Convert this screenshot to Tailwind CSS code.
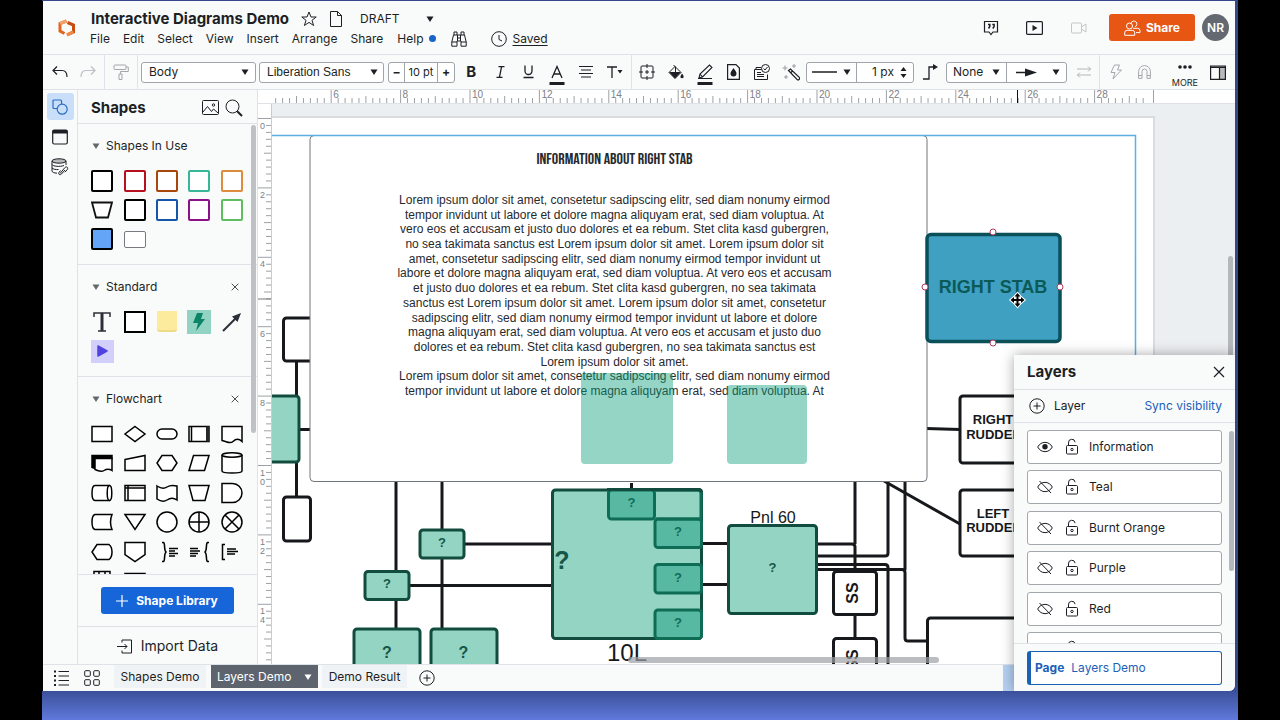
<!DOCTYPE html>
<html lang="en">

<head>
    <meta charset="utf-8">
    <title>Interactive Diagrams Demo</title>
    <script src="https://cdn.jsdelivr.net/npm/@tailwindcss/browser@4"></script>
</head>

<body class="h-screen overflow-hidden bg-black px-[42px] font-['Inter','Liberation_Sans',sans-serif] text-xs text-[#1c1f24]">
    <!-- shared icons -->
    <svg class="hidden">
        <symbol id="caret" viewBox="0 0 8 6"><path d="M0.5 0.5h7L4 6z" fill="currentColor" /></symbol>
        <symbol id="close" viewBox="0 0 12 12"><path d="M1 1l10 10M11 1L1 11" fill="none" stroke="currentColor" stroke-width="1.2" /></symbol>
        <symbol id="lock" viewBox="0 0 14 18">
            <g fill="none" stroke="currentColor"><rect x="1.5" y="7.5" width="11" height="8.500" rx="1" /><path d="M3.500 7.500V5a3.300 3.300 0 0 1 6.600-.8" /><circle cx="7" cy="11.500" r="1.200" /></g>
        </symbol>
        <symbol id="eye" viewBox="0 0 16 12">
            <path d="M.7 6C4-.2 12-.2 15.300 6C12 12.200 4 12.200 .7 6z" fill="none" stroke="currentColor" /><circle cx="8" cy="5.800" r="2.700" fill="currentColor" />
        </symbol>
        <symbol id="eye-off" viewBox="0 0 16 14">
            <path d="M.7 7C4 .8 12 .8 15.300 7C12 13.200 4 13.200 .7 7zM2.500 1l11.500 12" fill="none" stroke="currentColor" />
        </symbol>
        <symbol id="plus-circle" viewBox="0 0 16 16">
            <path d="M8 4.500v7M4.500 8h7" fill="none" stroke="currentColor" /><circle cx="8" cy="8" r="7.200" fill="none" stroke="currentColor" />
        </symbol>
    </svg>

    <div class="h-full bg-linear-to-t from-[#6079dc] via-[#33478b] via-5% to-[#33478b] pt-px pr-[3px] pb-[29px]">
        <div class="relative flex h-full flex-col overflow-hidden rounded-br-md border-l border-black bg-[#f9fafa]">

            <!-- title and menus -->
            <header class="flex h-[54px] shrink-0 items-center border-b border-[#dfe3e8] pr-[6px]">
                <svg class="ml-[15px] h-[18px] w-[18px]" viewBox="0 0 18 18" fill="none" stroke-width="3">
                    <path d="M8.500 2L2 4.500V12L6.500 14.500" stroke="#e0661f" /><path d="M2 4.500L8.500 2" stroke="#f6a065" />
                    <path d="M9.500 3.500L15.500 6V13L9 15.800" stroke="#c94d12" /><path d="M15.500 13L9 15.800" stroke="#f08a45" />
                </svg>
                <div class="ml-[15px] flex flex-col pt-[3px]">
                    <div class="-mt-px flex h-5 items-center">
                        <h1 class="text-[15px] font-bold whitespace-nowrap">Interactive Diagrams Demo</h1>
                        <button class="ml-3" aria-label="Favorite"><svg class="h-4 w-4" viewBox="0 0 16 16" fill="none" stroke="currentColor"><path d="M8 1l2 5h5.200l-4.200 3.300 1.600 5.200L8 11.400 3.400 14.500 5 9.300.8 6H6z" /></svg></button>
                        <button class="ml-[13px]" aria-label="Document"><svg class="h-4 w-3" viewBox="0 0 12 16" fill="none" stroke="currentColor"><path d="M.5.500h7l4 4v11H.5zM7.500.500v4h4" /></svg></button>
                        <label class="relative ml-[18px] flex items-center">
                            <span class="sr-only">Status</span>
                            <select class="w-[74px] appearance-none text-xs"><option>DRAFT</option></select>
                            <svg class="pointer-events-none absolute right-0 h-[6px] w-2"><use href="#caret" /></svg>
                        </label>
                    </div>
                    <nav class="-ml-px flex h-5 items-center gap-[13px]">
                        <button>File</button><button>Edit</button><button>Select</button><button>View</button><button>Insert</button><button>Arrange</button><button>Share</button>
                        <button class="ml-px flex items-center gap-[5px]">Help<span class="h-[7px] w-[7px] rounded-full bg-[#1a64c8]"></span></button>
                        <button class="ml-[2px]" aria-label="Find"><svg class="h-4 w-4" viewBox="0 0 16 16" fill="none" stroke="currentColor"><path d="M3 4V1h3v3M10 4V1h3v3M6.500 4h3v6h-3zM6.500 4H2.500L.8 11v4.200h5.200V10M9.500 4h4l1.700 7v4.200H10V10M.8 11H6M10 11h5.200M6.500 7h3" /></svg></button>
                        <button class="ml-[11px] flex items-center gap-[6px] underline underline-offset-2"><svg class="h-4 w-4" viewBox="0 0 16 16" fill="none" stroke="currentColor"><circle cx="8" cy="8" r="7.300" /><path d="M8 4v4.500l3 1.500" /></svg>Saved</button>
                    </nav>
                </div>
                <div class="ml-auto flex items-center">
                    <button aria-label="Comments"><svg class="h-4 w-4" viewBox="0 0 16 16" fill="none" stroke="currentColor" stroke-width="1.200"><path d="M1.500 1.500h13v10.500H10l-2 2.500L6 12H1.500z" /><path d="M5 4.500h1.800v2L5.500 8.500M9.300 4.500h1.800v2L9.800 8.500" stroke-width="1.500" /></svg></button>
                    <button class="ml-[27px]" aria-label="Present"><svg class="h-[14px] w-[17px]" viewBox="0 0 17 14"><rect x=".6" y=".6" width="15.800" height="12.800" rx="1" fill="none" stroke="currentColor" stroke-width="1.200" /><path d="M6.500 4l5 3-5 3z" fill="currentColor" /></svg></button>
                    <button class="ml-7 text-[#c3c6ca]" aria-label="Video"><svg class="h-3 w-4" viewBox="0 0 16 12" fill="none" stroke="currentColor"><rect x=".5" y="1" width="10" height="10" rx="1" /><path d="M10.500 5l4.500-3v8l-4.500-3" /></svg></button>
                    <button class="ml-[22px] flex h-[27px] w-[86px] items-center justify-center gap-[5px] rounded-[3px] bg-[#e85614] text-xs font-bold text-white">
                        <svg class="h-4 w-[17px]" viewBox="0 0 17 16" fill="none" stroke="currentColor"><circle cx="5.500" cy="6" r="3" /><path d="M.7 15.300v-2.500a2.500 2.500 0 0 1 2.500-2.500h5a2.500 2.500 0 0 1 2.500 2.500v2.500zM7 3.200a3 3 0 1 1 4 3.600M9 8.300h4.500a2.500 2.500 0 0 1 2.500 2.500v1.800h-4" /></svg>Share
                    </button>
                    <button class="ml-[7px] h-[27px] w-[27px] rounded-full bg-[#646870] text-xs font-semibold text-white">NR</button>
                </div>
            </header>

            <!-- formatting toolbar -->
            <div class="flex h-[35px] shrink-0 items-center border-b border-[#dfe3e8]">
                <button class="ml-[9px]" aria-label="Undo"><svg class="h-3 w-4" viewBox="0 0 16 12" fill="none" stroke="currentColor" stroke-width="1.200"><path d="M5 .5L1 4.500l4 4M1 4.500h9c3 0 5 2 5 6.500" /></svg></button>
                <button class="ml-3 text-[#bcc0c4]" aria-label="Redo"><svg class="h-3 w-4" viewBox="0 0 16 12" fill="none" stroke="currentColor" stroke-width="1.200"><path d="M11 .5l4 4-4 4M15 4.500H6c-3 0-5 2-5 6.500" /></svg></button>
                <div class="ml-2 h-full w-px bg-[#dfe3e8]"></div>
                <button class="ml-2 text-[#a4a8ac]" aria-label="Copy style"><svg class="h-4 w-4" viewBox="0 0 16 16" fill="none" stroke="currentColor"><rect x="1" y="1" width="12" height="4.500" rx="1" /><path d="M13 3h2.300v4.500H7.500V10M6 10h3v5.500H6z" /></svg></button>
                <div class="ml-2 h-full w-px bg-[#dfe3e8]"></div>
                <label class="relative ml-[3px] flex items-center">
                    <span class="sr-only">Text style</span>
                    <select class="h-[21px] w-[115px] appearance-none rounded-[3px] border border-[#9fa5aa] bg-white px-[7px] text-xs"><option>Body</option></select>
                    <svg class="pointer-events-none absolute right-[7px] h-[6px] w-2"><use href="#caret" /></svg>
                </label>
                <label class="relative ml-[3px] flex items-center">
                    <span class="sr-only">Font</span>
                    <select class="h-[21px] w-[125px] appearance-none rounded-[3px] border border-[#9fa5aa] bg-white px-[7px] font-['Liberation_Sans',sans-serif] text-xs"><option>Liberation Sans</option></select>
                    <svg class="pointer-events-none absolute right-[6px] h-[6px] w-2"><use href="#caret" /></svg>
                </label>
                <div class="ml-1 flex h-[21px] w-[67px] divide-x divide-[#9fa5aa] rounded-[3px] border border-[#9fa5aa] bg-white text-xs">
                    <button class="w-4 font-bold" aria-label="Smaller">−</button>
                    <input class="w-[33px] text-center text-[11px]" aria-label="Font size" value="10 pt">
                    <button class="w-4 font-bold" aria-label="Larger">+</button>
                </div>
                <div class="ml-[2px] flex w-[172px] items-center *:flex *:h-6 *:flex-1 *:items-center *:justify-center">
                    <button class="text-[15px] font-bold">B</button>
                    <button aria-label="Italic"><svg class="h-3 w-[9px]" viewBox="0 0 9 12" fill="none" stroke="currentColor" stroke-width="1.300"><path d="M2.500 .7h6M.5 11.300h6M5.600 .7L3.400 11.300" /></svg></button>
                    <button aria-label="Underline"><svg class="h-[14px] w-[11px]" viewBox="0 0 11 14" fill="none" stroke="currentColor" stroke-width="1.300"><path d="M2 .5V6a3.500 3.500 0 0 0 7 0V.5M.5 12.500h10" /></svg></button>
                    <button class="pt-[5px]" aria-label="Text color"><svg class="h-5 w-4" viewBox="0 0 16 20"><path d="M3 13L8 1.500 13 13M4.600 9h6.800" fill="none" stroke="currentColor" stroke-width="1.300" /><path d="M.5 17h15v3H.5z" fill="currentColor" /></svg></button>
                    <button aria-label="Align"><svg class="h-3 w-[14px]" viewBox="0 0 14 12" stroke="currentColor"><path d="M0 .5h14M2 4h10M0 7.500h14M2 11h10" /></svg></button>
                    <button aria-label="Text options"><svg class="h-3 w-4" viewBox="0 0 16 12"><path d="M0 1h10M5 1v11" fill="none" stroke="currentColor" stroke-width="1.300" /><path d="M10.500 4h5l-2.500 3.500z" fill="currentColor" /></svg></button>
                </div>
                <div class="ml-[2px] h-full w-px bg-[#dfe3e8]"></div>
                <div class="ml-px flex w-[172px] items-center *:flex *:h-6 *:flex-1 *:items-center *:justify-center">
                    <button aria-label="Fit"><svg class="h-4 w-4" viewBox="0 0 16 16" fill="none" stroke="currentColor"><rect x="2" y="2" width="12" height="12" rx="1" /><path d="M8 0v4M8 12v4M0 8h4M12 8h4M8 6v4M6 8h4" /></svg></button>
                    <button aria-label="Fill"><svg class="h-4 w-4" viewBox="0 0 16 16"><path d="M1 8.500L7 2.500l6 6-6 6z" fill="none" stroke="currentColor" /><path d="M1 8l12 0-6 6.500zM14 9.500c1.500 2 2 3 1.500 4s-2.500 1-3 0 .5-2 1.500-4z" fill="currentColor" /><path d="M5.500 1l2 2v5" fill="none" stroke="currentColor" /></svg></button>
                    <button class="pt-[4px]" aria-label="Line color"><svg class="h-[22px] w-4" viewBox="0 0 16 22"><path d="M2 15l1-4L12.500 2l2.500 2.500L5.500 14zM3 11l2.500 3M1 15.500h14" fill="none" stroke="currentColor" stroke-width="1.100" /><path d="M.5 19h15v3H.5z" fill="currentColor" /></svg></button>
                    <button aria-label="Opacity"><svg class="h-4 w-[13px]" viewBox="0 0 13 16"><path d="M.6.600h8.400l3.400 3.400v11.400H.6z" fill="none" stroke="currentColor" stroke-width="1.200" /><path d="M6.500 4c2 3 3 4 3 5.500a3 3 0 0 1-6 0C3.500 8 4.500 7 6.500 4z" fill="currentColor" /></svg></button>
                    <button aria-label="Actions"><svg class="h-4 w-4" viewBox="0 0 16 16" fill="none" stroke="currentColor"><path d="M7 3.500H2v2M.5 5.500h7M.5 5.500v10h13v-5M3 8.500h4M3 10.500h7M3 12.500h7" /><circle cx="11.500" cy="4.500" r="4" /><path d="M9.500 4.500l1.500 1.500 2.500-3" /></svg></button>
                    <button aria-label="Magic"><svg class="h-[17px] w-[18px]" viewBox="0 0 18 17" fill="none" stroke="currentColor"><path d="M6.500 6.500l2-1.500 9 8.500c.5 1.500-.5 2.500-2 2.500zM8.500 9l2-2" stroke-width="1.200" /><path d="M3 1.500v5M.5 4h5M12 0v4M10 2h4M4 11v4M2 13h4" stroke="#9a9da1" /></svg></button>
                </div>
                <div class="ml-px flex h-[21px] w-[108px] divide-x divide-[#9fa5aa] rounded-[3px] border border-[#9fa5aa] bg-white">
                    <button class="flex w-[50px] items-center justify-center gap-[6px]" aria-haspopup="listbox" aria-label="Line style">
                        <svg class="h-[2px] w-[25px]"><path d="M0 1h25" stroke="currentColor" stroke-width="1.500" /></svg><svg class="h-[6px] w-2"><use href="#caret" /></svg>
                    </button>
                    <label class="flex w-[56px] items-center justify-end gap-[6px] pr-[6px]"><span class="sr-only">Line width</span>
                        <input class="w-[28px] text-right text-xs" value="1 px">
                        <svg class="h-[13px] w-[7px]" viewBox="0 0 7 13"><path d="M.5 5h6l-3-4zM.5 8h6l-3 4z" fill="currentColor" /></svg>
                    </label>
                </div>
                <button class="ml-[9px]" aria-label="Line shape"><svg class="h-4 w-4" viewBox="0 0 16 16"><path d="M0 15h6V3h5" fill="none" stroke="currentColor" stroke-width="1.300" /><path d="M10 0l5 3-5 3z" fill="currentColor" /></svg></button>
                <div class="ml-[7px] flex h-[21px] w-[121px] divide-x divide-[#9fa5aa] rounded-[3px] border border-[#9fa5aa] bg-white">
                    <label class="relative flex w-[60px] items-center"><span class="sr-only">Line start</span>
                        <select class="w-full appearance-none pl-[6px] text-xs"><option>None</option></select>
                        <svg class="pointer-events-none absolute right-[6px] h-[6px] w-2"><use href="#caret" /></svg>
                    </label>
                    <button class="flex w-[59px] items-center justify-end gap-[15px] pr-[6px]" aria-haspopup="listbox" aria-label="Line end">
                        <svg class="h-[9px] w-[21px]" viewBox="0 0 21 9"><path d="M0 4.500h12" stroke="currentColor" stroke-width="1.500" /><path d="M9 .5l12 4-12 4z" fill="currentColor" /></svg><svg class="h-[6px] w-2"><use href="#caret" /></svg>
                    </button>
                </div>
                <button class="ml-[9px] text-[#b3b7bb]" aria-label="Swap ends"><svg class="h-3 w-4" viewBox="0 0 16 12" fill="none" stroke="currentColor"><path d="M1 3h14M12 .5L14.500 3 12 5.500M15 9H1M4 6.500L1.500 9 4 11.500" /></svg></button>
                <div class="ml-[7px] h-full w-px bg-[#dfe3e8]"></div>
                <button class="ml-[10px] text-[#a4a8ac]" aria-label="Actions"><svg class="h-4 w-3" viewBox="0 0 12 16" fill="none" stroke="currentColor"><path d="M4.500 1h5L7.500 6H11.500L3 15l2-6.500H1z" /></svg></button>
                <button class="ml-4 text-[#a4a8ac]" aria-label="Magnet"><svg class="h-[14px] w-[13px]" viewBox="0 0 13 14" fill="none" stroke="currentColor"><path d="M.6 13.400V6.500a5.900 5.900 0 0 1 11.800 0v6.900H9V6.500a2.500 2.500 0 0 0-5 0v6.900zM.6 10.500H4M9 10.500h3.400" /></svg></button>
                <button class="ml-auto flex flex-col items-center gap-2 pt-[10px] text-[9px] leading-[12px]"><svg class="h-1 w-[14px]" viewBox="0 0 14 4" fill="currentColor"><circle cx="2" cy="2" r="1.800" /><circle cx="7" cy="2" r="1.800" /><circle cx="12" cy="2" r="1.800" /></svg>MORE</button>
                <button class="mr-[9px] ml-[12px]" aria-label="Toggle panel"><svg class="h-[15px] w-4" viewBox="0 0 16 15"><path d="M9.500 2.500H15v12H9.500z" fill="#b7babd" /><path d="M.6 1h14.800v13.400H.6zM.6 2.300h14.800M9.500 2v12" fill="none" stroke="currentColor" stroke-width="1.200" /></svg></button>
            </div>

            <div class="flex min-h-0 flex-1">
                <!-- icon rail -->
                <div class="flex w-[35px] shrink-0 flex-col items-center border-r border-[#dfe3e8] pt-[3px]">
                    <button class="flex h-[27px] w-[27px] items-center justify-center rounded-[3px] bg-[#c9dff9] text-[#2a6cc4]" aria-label="Shapes"><svg class="h-4 w-4" viewBox="0 0 16 16" fill="none" stroke="currentColor" stroke-width="1.200"><path d="M5 9.500H2a1 1 0 0 1-1-1V2a1 1 0 0 1 1-1h6.500a1 1 0 0 1 1 1v3" /><circle cx="10.200" cy="10.200" r="5" /></svg></button>
                    <button class="mt-[9px]" aria-label="Pages"><svg class="h-4 w-4" viewBox="0 0 16 16"><rect x=".7" y="1" width="14.600" height="14" rx="1.500" fill="none" stroke="currentColor" stroke-width="1.200" /><path d="M.7 1h14.600v3.500H.7z" fill="currentColor" /></svg></button>
                    <button class="mt-[13px]" aria-label="Data"><svg class="h-[18px] w-[18px]" viewBox="0 0 18 18" fill="none" stroke="currentColor"><ellipse cx="8" cy="3" rx="7" ry="2.200" fill="#b7babd" /><path d="M1 3v10c0 1.200 2 2 5 2.200M15 3v4M1 6.500c1 2 8 2.500 12 1M1 9.800c1 1.500 4 2 6.500 1.700M9 15.500l5-6c1.500-1.500 3.500 0 2.500 1.700l-2.500 3M14 12l-3.500 4c-1.500 1.500-3.500.2-2.700-1.300l1.700-2.200" /></svg></button>
                </div>

                <!-- shapes panel -->
                <aside class="relative flex w-[180px] shrink-0 flex-col border-r border-[#dfe3e8]">
                    <div class="flex h-[34px] shrink-0 items-center border-b border-[#dfe3e8] pt-[2px] pr-[14px] pl-[13px]">
                        <h2 class="text-[15px] font-bold">Shapes</h2>
                        <button class="ml-auto" aria-label="Images"><svg class="h-[15px] w-[17px]" viewBox="0 0 17 15" fill="none" stroke="currentColor"><rect x=".5" y=".5" width="16" height="14" rx="1" /><path d="M1 12l4.500-5.500 4 5 2-2.500 4.500 4" /><circle cx="11.500" cy="5" r="1.200" /></svg></button>
                        <button class="ml-[6px]" aria-label="Search"><svg class="h-[18px] w-[18px]" viewBox="0 0 18 18" fill="none" stroke="currentColor"><circle cx="7.500" cy="7.500" r="6.500" /><path d="M12.200 12.200l4.800 4.800" stroke-width="2" /></svg></button>
                    </div>

                    <div class="min-h-0 flex-1 overflow-hidden">
                        <section class="h-[141px] border-b border-[#dfe3e8] pt-3 pl-2">
                            <h3 class="flex h-5 items-center gap-[6px] pl-[6px]"><svg class="h-[6px] w-2 text-[#63676b]"><use href="#caret" /></svg>Shapes In Use</h3>
                            <div class="mt-[10px] grid h-[88px] w-[162px] grid-cols-5 grid-rows-3 place-items-center">
                                <div class="h-[22px] w-[22px] rounded-[2px] border-2 border-black bg-white"></div>
                                <div class="h-[22px] w-[22px] rounded-[2px] border-2 border-[#b5101c] bg-white"></div>
                                <div class="h-[22px] w-[22px] rounded-[2px] border-2 border-[#a8470c] bg-white"></div>
                                <div class="h-[22px] w-[22px] rounded-[2px] border-2 border-[#36b898] bg-white"></div>
                                <div class="h-[22px] w-[22px] rounded-[2px] border-2 border-[#dc8c3c] bg-white"></div>
                                <svg class="h-[18px] w-[22px]" viewBox="0 0 22 18"><path d="M1 1.500h20l-4 15H5z" fill="#fff" stroke="#111" stroke-width="1.800" /></svg>
                                <div class="h-[22px] w-[22px] rounded-[2px] border-2 border-black bg-white"></div>
                                <div class="h-[22px] w-[22px] rounded-[2px] border-2 border-[#1556a8] bg-white"></div>
                                <div class="h-[22px] w-[22px] rounded-[2px] border-2 border-[#8b1186] bg-white"></div>
                                <div class="h-[22px] w-[22px] rounded-[2px] border-2 border-[#5fbd5f] bg-white"></div>
                                <div class="h-[22px] w-[22px] rounded-[2px] border-2 border-black bg-[#65a5f7]"></div>
                                <div class="h-[17px] w-[22px] rounded-[2px] border border-[#777b80] bg-white"></div>
                            </div>
                        </section>

                        <section class="h-[112px] border-b border-[#dfe3e8] pt-3 pl-2">
                            <h3 class="flex h-5 items-center gap-[6px] pl-[6px]"><svg class="h-[6px] w-2 text-[#63676b]"><use href="#caret" /></svg>Standard
                                <button class="mr-[18px] ml-auto" aria-label="Close Standard"><svg class="h-2 w-2"><use href="#close" /></svg></button></h3>
                            <div class="mt-[10px] grid h-[59px] w-[162px] grid-cols-5 grid-rows-2 place-items-center">
                                <svg class="h-5 w-[18px]" viewBox="0 0 18 20"><path d="M1 5V1h16v4M9 1v18M5 19h8" fill="none" stroke="#2b3038" stroke-width="1.500" /><path d="M7.500 1h3v18h-3z" fill="#2b3038" /></svg>
                                <div class="h-[22px] w-[22px] border-2 border-black bg-white"></div>
                                <div class="h-[21px] w-[20px] rounded-b-[3px] border-b-2 border-[#eedb85] bg-[#fcea9d]"></div>
                                <div class="flex h-6 w-6 items-center justify-center bg-[#93d3c3]"><svg class="h-[18px] w-3" viewBox="0 0 12 18"><path d="M4 0h6L8 6h4L3 18 5 10H0z" fill="#0c8468" /></svg></div>
                                <svg class="h-5 w-5" viewBox="0 0 20 20"><path d="M1 19L14 6" stroke="#2b3038" stroke-width="2" /><path d="M19 1l-3.500 9L10 4.500z" fill="#2b3038" /></svg>
                                <div class="flex h-[23px] w-[23px] items-center justify-center bg-[#d3cffb]"><svg class="h-3 w-[11px]" viewBox="0 0 11 12"><path d="M1 1l9 5-9 5z" fill="#5143e0" stroke="#5143e0" stroke-linejoin="round" stroke-width="1.500" /></svg></div>
                            </div>
                        </section>

                        <section class="pt-3 pl-2">
                            <h3 class="flex h-5 items-center gap-[6px] pl-[6px]"><svg class="h-[6px] w-2 text-[#63676b]"><use href="#caret" /></svg>Flowchart
                                <button class="mr-[18px] ml-auto" aria-label="Close Flowchart"><svg class="h-2 w-2"><use href="#close" /></svg></button></h3>
                            <div class="mt-[10px] grid h-[177px] w-[162px] grid-cols-5 grid-rows-6 place-items-center *:h-6 *:w-6 *:fill-white *:stroke-black *:stroke-[1.5]">
                                <svg viewBox="0 0 24 24"><path d="M2 4.500h20v15H2z" /></svg>
                                <svg viewBox="0 0 24 24"><path d="M12 4.500l10 7.500-10 7.500L2 12z" /></svg>
                                <svg viewBox="0 0 24 24"><rect x="2" y="7" width="20" height="10" rx="5" /></svg>
                                <svg viewBox="0 0 24 24"><path d="M2 4.500h20v15H2z" /><path d="M4.500 4.500v15" /><path d="M20.500 4.500v15" stroke="#26282b" stroke-width="3" /></svg>
                                <svg viewBox="0 0 24 24"><path d="M2 4.500h20v15c-3-3-6-3-9 0s-6 0-11-1z" /></svg>
                                <svg viewBox="0 0 24 24"><path d="M2 4.500h20v3H5v10l-3-1z" fill="#000" /><path d="M5 7.500h17v12c-3-2-5-2-8 0s-6 0-9-1z" /></svg>
                                <svg viewBox="0 0 24 24"><path d="M2 8.500l20-4v15H2z" /></svg>
                                <svg viewBox="0 0 24 24"><path d="M7 4.500h10l5 7.500-5 7.500H7L2 12z" /></svg>
                                <svg viewBox="0 0 24 24"><path d="M6.500 4.500H22l-4.500 15H2z" /></svg>
                                <svg viewBox="0 0 24 24"><path d="M2 4v16c0 2.700 20 2.700 20 0V4" /><ellipse cx="12" cy="4" rx="10" ry="2.200" /></svg>
                                <svg viewBox="0 0 24 24"><path d="M20 4.500H5c-4 0-4 15 0 15h15" /><ellipse cx="19.500" cy="12" rx="2.300" ry="7.500" /></svg>
                                <svg viewBox="0 0 24 24"><path d="M2 4.500h20v15H2zM2 7h20M5 4.500v15" /></svg>
                                <svg viewBox="0 0 24 24"><path d="M2 5c3 2 7 3 10 1s6-2 10-1v14c-3-2-7-2-10 0s-7 1-10-1z" /></svg>
                                <svg viewBox="0 0 24 24"><path d="M2 4.500h20l-4 15H6z" /></svg>
                                <svg viewBox="0 0 24 24"><path d="M2 2.500h10.500a9.500 9.500 0 0 1 0 19H2z" /></svg>
                                <svg viewBox="0 0 24 24"><path d="M5 4.500h17c-2 5-2 10 0 15H5c-4-1-4-14 0-15z" /></svg>
                                <svg viewBox="0 0 24 24"><path d="M2 4.500h20l-10 15z" /></svg>
                                <svg viewBox="0 0 24 24"><circle cx="12" cy="12" r="10" /></svg>
                                <svg viewBox="0 0 24 24"><circle cx="12" cy="12" r="10" /><path d="M12 2v20M2 12h20" /></svg>
                                <svg viewBox="0 0 24 24"><circle cx="12" cy="12" r="10" /><path d="M5 5l14 14M19 5L5 19" /></svg>
                                <svg viewBox="0 0 24 24"><path d="M7 4.500h12c4 3 4 12 0 15H7L2 12z" /></svg>
                                <svg viewBox="0 0 24 24"><path d="M2 2.500h20v12l-10 7-10-7z" /></svg>
                                <svg viewBox="0 0 24 24"><path d="M7 2.500h1.500c2 1 0 7 2.500 9.500-2.500 2.500-.5 8.500-2.500 9.500H7" fill="none" /><path d="M14 8.500h9M14 11h6M14 13.500h9M14 16h6" /></svg>
                                <svg viewBox="0 0 24 24"><path d="M22 2.500h-1.500c-2 1 0 7-2.500 9.500 2.500 2.500.5 8.500 2.500 9.500H22" fill="none" /><path d="M3 8.500h8M3 11h10M3 13.500h8M3 16h6" /></svg>
                                <svg viewBox="0 0 24 24"><path d="M5 4.500H2.500v15H5" fill="none" /><path d="M7 9h9M7 11.500h11M7 14h8" /></svg>
                                <svg viewBox="0 0 24 24"><path d="M4 2.500h16v18H4zM9 2.500v9M15 2.500v9" /></svg>
                                <svg viewBox="0 0 24 24"><path d="M2 4.500h20v15H2z" /></svg>
                            </div>
                        </section>
                    </div>
                    <div class="absolute top-[35px] right-[1px] h-[308px] w-[5px] rounded-full bg-[#bfc2c5]"></div>

                    <div class="flex h-[52px] shrink-0 items-center justify-center border-t border-[#dfe3e8]">
                        <button class="-ml-px flex h-[27px] w-[133px] items-center justify-center gap-2 rounded-[3px] bg-[#1766d9] text-xs font-bold text-white">
                            <svg class="h-3 w-3" viewBox="0 0 12 12" stroke="currentColor" stroke-width="1.200"><path d="M6 0v12M0 6h12" /></svg>Shape Library</button>
                    </div>
                    <button class="flex h-[38px] shrink-0 items-center justify-center gap-2 border-t border-[#dfe3e8] pt-px text-[14px]">
                        <svg class="h-[15px] w-4" viewBox="0 0 16 15" fill="none" stroke="currentColor"><path d="M5 3.500V1h9.500v13H5v-2.500M0 7.500h10M7.500 5L10 7.500 7.500 10" /></svg>Import Data</button>
                </aside>

                <!-- canvas with rulers -->
                <div class="relative flex min-w-0 flex-1 flex-col">
                    <svg id="ruler-x" class="h-[14px] w-full shrink-0 border-b border-[#dfe3e8] bg-white font-['Liberation_Sans',sans-serif] text-[10px]"></svg>
                    <div class="flex min-h-0 flex-1">
                        <svg id="ruler-y" class="h-full w-[14px] shrink-0 border-r border-[#c9cdd0] bg-white font-['Liberation_Sans',sans-serif] text-[9px]"></svg>
                        <main class="relative min-w-0 flex-1 overflow-hidden bg-[#eceff1]">
                            <svg class="h-full w-full font-['Liberation_Sans',sans-serif] font-bold" text-anchor="middle">
                                <g transform="translate(-272 -104)">
                                    <rect x="200" y="117" width="954" height="600" fill="#fff" stroke="#d8dcde" stroke-width="2" />
                                    <!-- connectors -->
                                    <g fill="none" stroke="#16181c" stroke-width="3">
                                        <path d="M296.500 360v140M300 429.500h12M396 480v150M442 480v150M464 544h90M410 585.500h142M631.500 483v8M702 543.500h27M702 584.500h27" />
                                        <path d="M818 544h34q3 0 3 3v26M855 480v64M855 614v25M818 556h67q3 0 3-3V480M818 564.500h67q3 0 3 3V670M818 569.500h84q3 0 3 3V638q0 3 3 3h19M905 480v90" />
                                        <path d="M926 428.500l34 1M884 481l76 43" />
                                    </g>
                                    <g fill="#fff" stroke="#16181c" stroke-width="3">
                                        <rect x="283.500" y="318" width="40" height="43" rx="3" />
                                        <rect x="283.500" y="497" width="27" height="44" rx="3" />
                                        <rect x="833.500" y="571.500" width="43" height="43" rx="3" />
                                        <rect x="833.500" y="638.500" width="43" height="43" rx="3" />
                                        <rect x="960" y="396" width="68" height="67" rx="3" />
                                        <rect x="960" y="490" width="68" height="66" rx="3" />
                                        <rect x="927.500" y="618" width="140" height="67" rx="3" />
                                    </g>
                                    <!-- teal layer -->
                                    <g fill="#93d4c3" stroke="#124c3f" stroke-width="3">
                                        <rect x="240" y="396" width="59" height="66" rx="3" />
                                        <rect x="420" y="530" width="44" height="28" rx="3" />
                                        <rect x="365" y="571.500" width="44" height="28" rx="3" />
                                        <rect x="354" y="629" width="66" height="66" rx="3" />
                                        <rect x="431" y="629" width="66" height="66" rx="3" />
                                        <rect x="552.500" y="490" width="149" height="148.500" rx="3" />
                                        <rect x="728.500" y="525.500" width="88" height="88" rx="3" />
                                    </g>
                                    <g fill="#58b9a2" stroke="#0f6d56" stroke-width="3">
                                        <rect x="608.500" y="490" width="46" height="29" rx="3" />
                                        <rect x="655" y="519" width="46.500" height="28.500" rx="3" />
                                        <rect x="655" y="564.500" width="46.500" height="28.500" rx="3" />
                                        <rect x="655" y="610" width="46.500" height="28.500" rx="3" />
                                        <path d="M656 490h42q3 0 3 3v26h-45" fill="none" />
                                    </g>
                                    <path d="M607 489.500h92q2.500 0 2.500 3" fill="none" stroke="#124c3f" stroke-width="3" />
                                    <g fill="#15574a" font-size="13">
                                        <text x="442" y="547">?</text><text x="387" y="588">?</text>
                                        <text x="387" y="658" font-size="16">?</text><text x="463.500" y="658" font-size="16">?</text>
                                        <text x="562" y="569" font-size="25">?</text><text x="772.500" y="572">?</text>
                                    </g>
                                    <g fill="#0f6d56" font-size="13">
                                        <text x="631.500" y="507">?</text><text x="678" y="536">?</text><text x="678" y="582">?</text><text x="678" y="627">?</text>
                                    </g>
                                    <g fill="#16181c">
                                        <text x="627" y="661" font-size="24" font-weight="400">10L</text>
                                        <text x="773" y="523" font-size="16" font-weight="400">Pnl 60</text>
                                        <g font-size="13">
                                            <text x="993" y="424">RIGHT</text><text x="994" y="439">RUDDER</text>
                                            <text x="993" y="518">LEFT</text><text x="994" y="532">RUDDER</text>
                                        </g>
                                        <text transform="translate(858 593) rotate(-90)" font-size="16">SS</text>
                                        <text transform="translate(858 660) rotate(-90)" font-size="16">SS</text>
                                    </g>
                                    <!-- information card -->
                                    <rect x="310" y="135.500" width="617" height="346" rx="4" fill="#fff" stroke="#70757a" />
                                    <path d="M260 135.500H1135.500V700" fill="none" stroke="#5bb0e0" stroke-width="1.500" />
                                    <!-- selected shape -->
                                    <rect x="927" y="234.500" width="133" height="107" rx="4" fill="#3fa0c2" stroke="#0b4f58" stroke-width="3.500" />
                                    <text x="993" y="293" font-size="18" fill="#0b5a58">RIGHT STAB</text>
                                    <g fill="#fff" stroke="#b23a5c"><circle cx="993" cy="232" r="3" /><circle cx="925" cy="287" r="3" /><circle cx="1060" cy="287" r="3" /><circle cx="993" cy="343" r="3" /></g>
                                    <path d="M1017.500 293l3 3.500h-2v2.500h2.500v-2l3.500 3-3.500 3v-2h-2.500v2.500h2l-3 3.500-3-3.500h2v-2.500h-2.500v2l-3.500-3 3.500-3v2h2.500v-2.500h-2z" fill="#000" stroke="#fff" stroke-width="2" paint-order="stroke" />
                                </g>
                            </svg>
                            <!-- card text -->
                            <div class="absolute top-[47px] left-[38px] flex w-[609px] flex-col items-center font-['Liberation_Sans',sans-serif] text-[12px] leading-[14px] text-[#26292e]">
                                <h2 class="font-['Bebas_Neue','Roboto_Condensed','Liberation_Sans_Narrow',sans-serif] text-[16px] leading-[18px] font-normal">INFORMATION ABOUT RIGHT STAB</h2>
                                <p class="mt-[24px] grid h-[205px] content-between text-center whitespace-nowrap *:block">
                                    <span>Lorem ipsum dolor sit amet, consetetur sadipscing elitr, sed diam nonumy eirmod</span>
                                    <span>tempor invidunt ut labore et dolore magna aliquyam erat, sed diam voluptua. At</span>
                                    <span>vero eos et accusam et justo duo dolores et ea rebum. Stet clita kasd gubergren,</span>
                                    <span>no sea takimata sanctus est Lorem ipsum dolor sit amet. Lorem ipsum dolor sit</span>
                                    <span>amet, consetetur sadipscing elitr, sed diam nonumy eirmod tempor invidunt ut</span>
                                    <span>labore et dolore magna aliquyam erat, sed diam voluptua. At vero eos et accusam</span>
                                    <span>et justo duo dolores et ea rebum. Stet clita kasd gubergren, no sea takimata</span>
                                    <span>sanctus est Lorem ipsum dolor sit amet. Lorem ipsum dolor sit amet, consetetur</span>
                                    <span>sadipscing elitr, sed diam nonumy eirmod tempor invidunt ut labore et dolore</span>
                                    <span>magna aliquyam erat, sed diam voluptua. At vero eos et accusam et justo duo</span>
                                    <span>dolores et ea rebum. Stet clita kasd gubergren, no sea takimata sanctus est</span>
                                    <span>Lorem ipsum dolor sit amet.</span>
                                    <span>Lorem ipsum dolor sit amet, consetetur sadipscing elitr, sed diam nonumy eirmod</span>
                                    <span>tempor invidunt ut labore et dolore magna aliquyam erat, sed diam voluptua. At</span>
                                </p>
                            </div>
                            <div class="absolute top-[269px] left-[309px] h-[91px] w-[92px] rounded-[4px] bg-[#0ea07a]/44"></div>
                            <div class="absolute top-[281px] left-[455px] h-[79px] w-[80px] rounded-[4px] bg-[#0ea07a]/44"></div>
                            <!-- scrollbars -->
                            <div class="absolute bottom-px left-[356px] h-[6px] w-[311px] rounded-full bg-[#9ca0a4]/70"></div>
                            <div class="absolute top-[152px] right-[2px] h-[300px] w-[5px] rounded-full bg-[#b4b8bc]"></div>
                        </main>
                    </div>
                </div>
            </div>

            <!-- page tabs -->
            <footer class="flex h-[27px] shrink-0 items-start border-t border-[#dfe3e8]">
                <button class="mt-[5px] ml-[11px]" aria-label="Page list"><svg class="h-4 w-[15px]" viewBox="0 0 15 16" stroke="currentColor"><path d="M4.500 1.500H15M4.500 6H15M4.500 10.500H15M4.500 15H15" /><path d="M0 1.500h2M0 6h2M0 10.500h2M0 15h2" stroke-width="2" /></svg></button>
                <button class="mt-[5px] mr-[14px] ml-[15px]" aria-label="Page grid"><svg class="h-4 w-4" viewBox="0 0 16 16" fill="none" stroke="currentColor"><rect x=".7" y=".7" width="5.600" height="5.600" rx="1" /><rect x="9.700" y=".7" width="5.600" height="5.600" rx="1" /><rect x=".7" y="9.700" width="5.600" height="5.600" rx="1" /><rect x="9.700" y="9.700" width="5.600" height="5.600" rx="1" /></svg></button>
                <button class="h-[23px] w-[92px] bg-[#f0f3f5] text-xs">Shapes Demo</button>
                <button class="ml-[5px] flex h-[23px] w-[107px] items-center justify-between bg-[#5e646e] px-[6px] text-xs text-white">Layers Demo<svg class="h-[6px] w-2"><use href="#caret" /></svg></button>
                <button class="ml-1 h-[23px] w-[85px] bg-[#f0f3f5] text-xs">Demo Result</button>
                <button class="mt-[5px] ml-3" aria-label="Add page"><svg class="h-4 w-4"><use href="#plus-circle" /></svg></button>
                <div class="mr-[221px] ml-auto h-full w-[11px] bg-[#b5d0f3]"></div>
            </footer>

            <!-- layers panel -->
            <section class="absolute right-0 bottom-0 flex h-[336px] w-[221px] flex-col bg-[#f9fafa] shadow-[0_0_12px_rgba(0,0,0,0.35)]">
                <div class="flex h-[35px] shrink-0 items-center justify-between border-b border-[#dfe3e8] pr-[10px] pl-[13px]">
                    <h2 class="text-[15px] font-bold">Layers</h2>
                    <button aria-label="Close layers"><svg class="h-3 w-3"><use href="#close" /></svg></button>
                </div>
                <div class="flex h-[33px] shrink-0 items-center justify-between border-b border-[#dfe3e8] pr-[13px] pl-[15px]">
                    <button class="flex items-center gap-[9px] text-xs"><svg class="h-4 w-4"><use href="#plus-circle" /></svg>Layer</button>
                    <button class="text-xs text-[#1c5fb8]">Sync visibility</button>
                </div>
                <div class="relative min-h-0 flex-1 overflow-hidden pt-[7px] pr-[13px] pl-[13px]">
                    <ul class="flex h-[236px] flex-col justify-between text-xs *:flex *:h-[34px] *:items-center *:rounded-[3px] *:border *:border-[#a3a8ad] *:bg-white *:pl-[9px]">
                        <li><button aria-label="Hide Information"><svg class="h-3 w-4"><use href="#eye" /></svg></button><button class="mr-[10px] ml-3" aria-label="Lock Information"><svg class="h-[18px] w-[14px]"><use href="#lock" /></svg></button>Information</li>
                        <li><button aria-label="Show Teal"><svg class="h-[14px] w-4"><use href="#eye-off" /></svg></button><button class="mr-[10px] ml-3" aria-label="Lock Teal"><svg class="h-[18px] w-[14px]"><use href="#lock" /></svg></button>Teal</li>
                        <li><button aria-label="Show Burnt Orange"><svg class="h-[14px] w-4"><use href="#eye-off" /></svg></button><button class="mr-[10px] ml-3" aria-label="Lock Burnt Orange"><svg class="h-[18px] w-[14px]"><use href="#lock" /></svg></button>Burnt Orange</li>
                        <li><button aria-label="Show Purple"><svg class="h-[14px] w-4"><use href="#eye-off" /></svg></button><button class="mr-[10px] ml-3" aria-label="Lock Purple"><svg class="h-[18px] w-[14px]"><use href="#lock" /></svg></button>Purple</li>
                        <li><button aria-label="Show Red"><svg class="h-[14px] w-4"><use href="#eye-off" /></svg></button><button class="mr-[10px] ml-3" aria-label="Lock Red"><svg class="h-[18px] w-[14px]"><use href="#lock" /></svg></button>Red</li>
                        <li><button aria-label="Show layer"><svg class="h-[14px] w-4"><use href="#eye-off" /></svg></button><button class="mr-[10px] ml-3" aria-label="Lock layer"><svg class="h-[18px] w-[14px]"><use href="#lock" /></svg></button></li>
                    </ul>
                    <div class="absolute top-2 right-px h-[140px] w-[5px] rounded-full bg-[#b4b8bc]"></div>
                </div>
                <div class="h-12 shrink-0 border-t border-[#dfe3e8] px-[13px] pt-[7px]">
                    <button class="flex h-[34px] w-full items-center gap-[7px] rounded-[3px] border border-l-4 border-[#1c62b4] bg-white pl-1 text-xs text-[#1c5fb8]"><b>Page</b>Layers Demo</button>
                </div>
            </section>
        </div>
    </div>

    <script>
        // one page unit is 34.7px, five ticks per unit
        const unit = 34.7

        function drawRuler(id, origin, ticks, vertical, marker) {
            let out = ''
            for (let i = 0; i < ticks; i++) {
                const pos = origin + i * unit / 5
                if (pos < 14) continue
                const len = i % 10 == 0 ? 14 : i % 5 == 0 ? 7 : 5
                out += vertical
                    ? `<path d="M${13 - len} ${pos}H13" stroke="#9da1a5"/>`
                    : `<path d="M${pos} ${13 - len}V13" stroke="#9da1a5"/>`
                if (i % 10 == 0) {
                    const label = String(i / 5)
                    if (vertical) {
                        for (let k = 0; k < label.length; k++) {
                            out += `<text x="2" y="${pos + 10 + k * 9}" fill="#7d8186">${label[k]}</text>`
                        }
                    } else {
                        out += `<text x="${pos + 2}" y="8" fill="#7d8186">${label}</text>`
                    }
                }
            }
            // pointer position, and the page's right edge
            out += vertical ? `<path d="M0 ${marker}H13" stroke="#777"/>` : `<path d="M${marker} 0V13" stroke="#111"/><path d="M895.500 0V13" stroke="#9da1a5"/>`
            document.getElementById(id).innerHTML = out
        }

        drawRuler('ruler-x', -135, 148, false, 759.5)
        drawRuler('ruler-y', 14.5, 79, true, 195)
    </script>
</body>

</html>
